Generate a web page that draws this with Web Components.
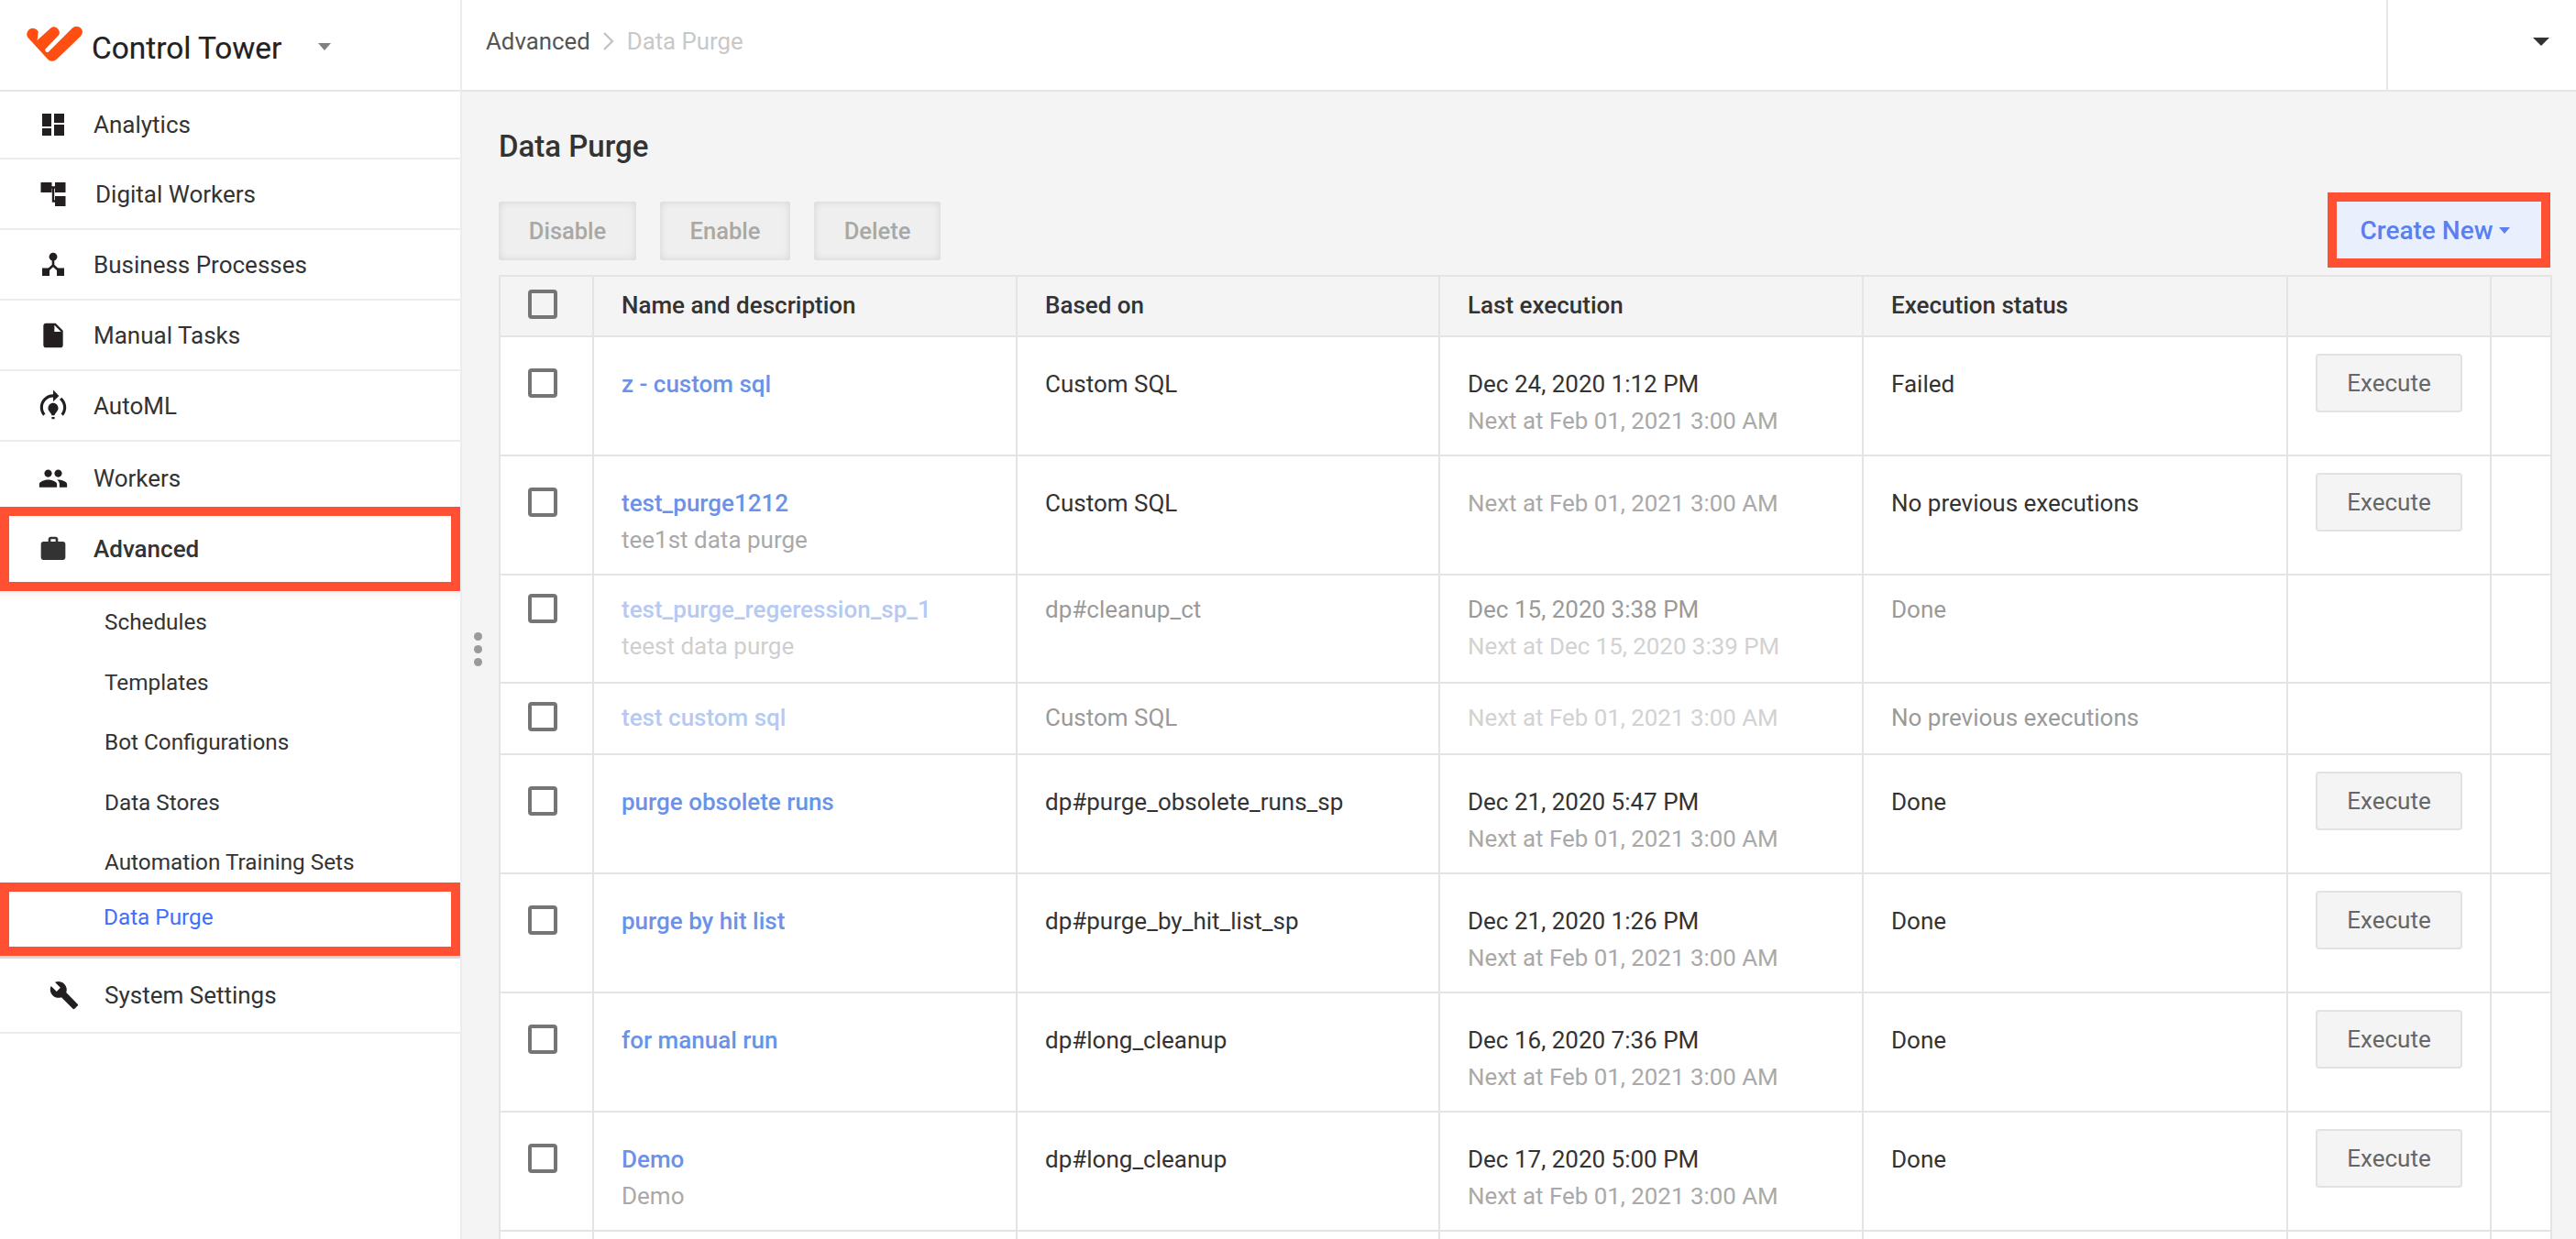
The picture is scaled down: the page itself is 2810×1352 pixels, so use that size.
<!DOCTYPE html>
<html><head><meta charset="utf-8"><title>Data Purge</title>
<style>
html,body{margin:0;padding:0;height:1352px;overflow:hidden;background:#f4f4f4;font-family:Roboto,"Liberation Sans",sans-serif;color:#333}
app-shell{height:1352px;overflow:hidden}
</style></head><body>
<app-shell>
  <side-bar slot="side">
    <nav-item label="Analytics" icon="analytics" first></nav-item>
    <nav-item label="Digital Workers" icon="digital" wide></nav-item>
    <nav-item label="Business Processes" icon="process"></nav-item>
    <nav-item label="Manual Tasks" icon="file"></nav-item>
    <nav-item label="AutoML" icon="automl"></nav-item>
    <nav-item label="Workers" icon="people" short></nav-item>
    <nav-item label="Advanced" icon="work" active></nav-item>
    <sub-nav>
      <sub-item>Schedules</sub-item>
      <sub-item>Templates</sub-item>
      <sub-item>Bot Configurations</sub-item>
      <sub-item>Data Stores</sub-item>
      <sub-item>Automation Training Sets</sub-item>
      <sub-item current>Data Purge</sub-item>
    </sub-nav>
    <nav-item label="System Settings" icon="wrench" settings></nav-item>
  </side-bar>
  <top-bar slot="top"></top-bar>
  <page-toolbar slot="main"></page-toolbar>
  <purge-table slot="main">
    <purge-row h="130" name="z - custom sql" based="Custom SQL" last="Dec 24, 2020 1:12 PM" next="Next at Feb 01, 2021 3:00 AM" status="Failed" exec></purge-row>
    <purge-row h="130" name="test_purge1212" desc="tee1st data purge" based="Custom SQL" next="Next at Feb 01, 2021 3:00 AM" status="No previous executions" exec></purge-row>
    <purge-row h="118" off name="test_purge_regeression_sp_1" desc="teest data purge" based="dp#cleanup_ct" last="Dec 15, 2020 3:38 PM" next="Next at Dec 15, 2020 3:39 PM" status="Done"></purge-row>
    <purge-row h="78" off name="test custom sql" based="Custom SQL" next="Next at Feb 01, 2021 3:00 AM" status="No previous executions"></purge-row>
    <purge-row h="130" name="purge obsolete runs" based="dp#purge_obsolete_runs_sp" last="Dec 21, 2020 5:47 PM" next="Next at Feb 01, 2021 3:00 AM" status="Done" exec></purge-row>
    <purge-row h="130" name="purge by hit list" based="dp#purge_by_hit_list_sp" last="Dec 21, 2020 1:26 PM" next="Next at Feb 01, 2021 3:00 AM" status="Done" exec></purge-row>
    <purge-row h="130" name="for manual run" based="dp#long_cleanup" last="Dec 16, 2020 7:36 PM" next="Next at Feb 01, 2021 3:00 AM" status="Done" exec></purge-row>
    <purge-row h="130" name="Demo" desc="Demo" based="dp#long_cleanup" last="Dec 17, 2020 5:00 PM" next="Next at Feb 01, 2021 3:00 AM" status="Done" exec></purge-row>
    <purge-row h="130" blank></purge-row>
  </purge-table>
</app-shell>
<script>
const ICONS={
analytics:`<svg width="26" height="26" viewBox="0 0 26 26"><g fill="#231f20"><rect x="1" y="1" width="10" height="14"/><rect x="1" y="17" width="10" height="8"/><rect x="14" y="1" width="11" height="10"/><rect x="14" y="13" width="11" height="12"/></g></svg>`,
digital:`<svg width="28" height="28" viewBox="0 0 28 28"><g fill="#231f20"><rect x="0.5" y="1" width="12" height="11"/><rect x="16" y="1" width="11.5" height="11"/><rect x="16" y="16" width="11.5" height="11"/></g><path d="M12 6.5H16M14 6.5V21.5H16" fill="none" stroke="#231f20" stroke-width="2.4"/></svg>`,
process:`<svg width="28" height="28" viewBox="0 0 28 28"><g fill="#231f20"><circle cx="14" cy="5.2" r="4.4"/><rect x="2" y="17.5" width="8" height="8.5"/><rect x="18" y="17.5" width="8" height="8.5"/></g><path d="M14 8V14.5L6 22M14 14.5L22 22" fill="none" stroke="#231f20" stroke-width="2.6"/></svg>`,
file:`<svg width="32" height="32" viewBox="0 0 24 24"><path fill="#231f20" d="M6 2c-1.1 0-2 .9-2 2v16c0 1.1.9 2 2 2h12c1.1 0 2-.9 2-2V8l-6-6H6zm7 7V3.5L18.5 9H13z"/></svg>`,
automl:`<svg width="38" height="38" viewBox="0 0 24 24"><path fill="#231f20" d="M15.5 13.5c0 2-2.5 3.5-2.5 5h-2c0-1.5-2.5-3-2.5-5C8.5 11.57 10.07 10 12 10s3.500 1.570 3.500 3.500zM13 19.500h-2V21h2v-1.500zM19 13c0 1.680-.59 3.210-1.580 4.420l1.420 1.420C20.180 17.270 21 15.230 21 13c0-2.740-1.230-5.190-3.160-6.840l-1.420 1.420C17.990 8.860 19 10.820 19 13zM16 5l-4-4v3c-4.970 0-9 4.030-9 9 0 2.230.82 4.270 2.160 5.840l1.420-1.420C5.590 16.210 5 14.680 5 13c0-3.860 3.140-7 7-7v3l4-4z"/></svg>`,
people:`<svg width="33" height="33" viewBox="0 0 24 24"><path fill="#231f20" d="M16 11c1.660 0 2.990-1.340 2.990-3S17.660 5 16 5c-1.660 0-3 1.340-3 3s1.340 3 3 3zm-8 0c1.660 0 2.990-1.340 2.990-3S9.660 5 8 5C6.340 5 5 6.340 5 8s1.340 3 3 3zm0 2c-2.330 0-7 1.170-7 3.500V19h14v-2.500c0-2.330-4.670-3.500-7-3.500zm8 0c-.29 0-.62.02-.97.05 1.160.84 1.970 1.970 1.970 3.450V19h6v-2.500c0-2.330-4.670-3.500-7-3.500z"/></svg>`,
work:`<svg width="32" height="32" viewBox="0 0 24 24"><path fill="#333" d="M20 6h-4V4c0-1.110-.89-2-2-2h-4c-1.110 0-2 .89-2 2v2H4c-1.110 0-1.990.89-1.990 2L2 19c0 1.110.89 2 2 2h16c1.110 0 2-.89 2-2V8c0-1.110-.89-2-2-2zm-6 0h-4V4h4v2z"/></svg>`,
wrench:`<svg width="33" height="33" viewBox="0 0 24 24"><path fill="#231f20" d="M22.700 19l-9.100-9.100c.9-2.300.4-5-1.500-6.900-2-2-5-2.400-7.400-1.300L9 6 6 9 1.600 4.700C.4 7.100.9 10.100 2.900 12.100c1.900 1.900 4.600 2.400 6.900 1.500l9.100 9.100c.4.4 1 .4 1.400 0l2.300-2.300c.5-.4.5-1.100.1-1.400z"/></svg>`
};
function def(name,css,html,extra){
  const C=class extends HTMLElement{
    connectedCallback(){
      if(this.shadowRoot)return;
      const r=this.attachShadow({mode:'open'});
      r.innerHTML=`<style>${css}</style>`+(typeof html==='function'?html(this):html);
      if(extra)extra(this,r);
    }
  };
  customElements.define(name,C);
}
def('app-shell',`:host{display:grid;grid-template-columns:504px 1fr;grid-template-rows:100px 1fr;width:2810px}
 .s{grid-row:1/3;grid-column:1;min-height:0}.t{grid-column:2;grid-row:1}.m{grid-column:2;grid-row:2;padding:0 26px 0 40px;min-height:0;overflow:hidden;position:relative}
 .dots{position:absolute;left:13px;top:590px;display:flex;flex-direction:column;gap:5px}
 .dots i{width:9px;height:9px;border-radius:50%;background:#9a9a9a}`,
 `<div class="s"><slot name="side"></slot></div><div class="t"><slot name="top"></slot></div><div class="m"><div class="dots"><i></i><i></i><i></i></div><slot name="main"></slot></div>`);
def('side-bar',`:host{display:flex;flex-direction:column;box-sizing:border-box;height:1352px;background:#fff;border-right:2px solid #ececec}
 header{height:100px;box-sizing:border-box;border-bottom:2px solid #e6e6e6;display:flex;align-items:center;position:relative}
 svg.logo{margin-left:28px;flex:none;margin-top:-2px}
 .n{font-size:33.400px;color:#222;margin-left:10px;-webkit-text-stroke:.2px #222;position:relative;top:3px}
 .c{width:0;height:0;border:7.500px solid transparent;border-top:8px solid #808080;border-bottom:0;margin-left:40px;margin-top:4px}`,
 `<header><svg class="logo" width="62" height="40" viewBox="28 29 62 40"><path fill="#fe4e12" d="M30 41.500A6.500 6.500 0 1 1 41.800 35.500L40.500 45L55.500 31.500A6 6 0 0 1 64 39.500L49.500 54.500A2.600 2.600 0 0 0 52.500 58L79 31.500A6 6 0 0 1 88 40.500L61.500 66A6.500 6.500 0 0 1 52 65.500Z"/></svg><span class="n">Control Tower</span><i class="c"></i></header><slot></slot>`);
def('nav-item',`:host{display:flex;align-items:center;box-sizing:border-box;height:77px;border-bottom:2px solid #ececec;font-size:26px;color:#333;position:relative;background:#fff}
 :host([first]){height:74px}:host([short]){height:71px;border-bottom:0;padding-top:8px}
 :host([active]){height:92px;border:10px solid #ff5033;font-weight:500;color:#333;z-index:2}
 :host([settings]){height:82px}
 .i{position:absolute;left:58px;top:50%;transform:translate(-50%,-50%);display:flex}
 :host([short]) .i{top:calc(50% + 4px)}
 :host([active]) .i{left:48px}
 :host([settings]) .i{left:70px}
 .t{margin-left:102px}:host([wide]) .t{margin-left:104px}:host([active]) .t{margin-left:92px}:host([settings]) .t{margin-left:114px}`,
 h=>`<span class="i">${ICONS[h.getAttribute('icon')]}</span><span class="t">${h.getAttribute('label')}</span>`);
def('sub-nav',`:host{display:block;padding-top:1px;border-bottom:3px solid #d8d8d8;box-shadow:inset 0 10px 10px -8px rgba(0,0,0,.09)}`,`<slot></slot>`);
def('sub-item',`:host{display:block;height:65.500px;line-height:65.500px;padding-left:114px;font-size:24.300px;color:#333;background:transparent}
 :host([current]){box-sizing:border-box;height:80px;line-height:56px;margin-top:-10.500px;border:10px solid #ff5033;padding-left:103px;color:#3d6fff;background:#fff;position:relative}`,`<slot></slot>`);
def('top-bar',`:host{display:flex;align-items:center;box-sizing:border-box;height:100px;background:#fff;border-bottom:2px solid #e6e6e6;font-size:25.800px;padding-left:26px}
 .t{display:flex;align-items:center;margin-top:-8px}
 .a{color:#555}.chev{margin:0 13px;display:flex}.b{color:#c8c8c8}
 .r{margin-left:auto;align-self:stretch;width:207px;box-sizing:border-box;border-left:2px solid #e6e6e6;position:relative}
 .r i{position:absolute;right:29px;top:41px;width:0;height:0;border:9px solid transparent;border-top:9px solid #333;border-bottom:0}`,
 `<div class="t"><span class="a">Advanced</span><span class="chev"><svg width="14" height="24" viewBox="0 0 14 24"><path d="M2 3l9 9-9 9" fill="none" stroke="#c4c4c4" stroke-width="2.400"/></svg></span><span class="b">Data Purge</span></div><div class="r"><i></i></div>`);
def('page-toolbar',`:host{display:block}
 h1{margin:40px 0 0;font-size:33px;line-height:40px;font-weight:500;color:#333}
 .bar{display:flex;height:82px;margin-top:30px;margin-bottom:8px;justify-content:space-between}
 .g{display:flex;gap:26px;padding-top:10px;height:64px}
 .d{box-sizing:border-box;height:64px;display:flex;align-items:center;justify-content:center;background:#efefef;border-radius:3px;box-shadow:inset 0 0 8px rgba(0,0,0,.12);color:#a8a8a8;font-size:25.500px;font-weight:500}
 .cn{box-sizing:border-box;width:243px;height:82px;margin-right:2px;border:10px solid #ff5033;padding-right:8px;background:#e9effc;color:#5a80f0;font-size:28px;font-weight:500;display:flex;align-items:center;justify-content:center;gap:7px}
 .cn i{width:0;height:0;border:6.500px solid transparent;border-top:7px solid #5a80f0;border-bottom:0;margin-top:1px}`,
 `<h1>Data Purge</h1><div class="bar"><div class="g"><div class="d" style="width:150px">Disable</div><div class="d" style="width:142px">Enable</div><div class="d" style="width:138px">Delete</div></div><div class="cn">Create New<i></i></div></div>`);
const COLS='grid-template-columns:102px 462px 461px 462px 463px 222px 66px;';
def('purge-table',`:host{display:block;width:2240px;box-sizing:border-box;border-top:2px solid #e4e4e4;border-left:2px solid #e4e4e4;font-size:26px;color:#333}
 .h{display:grid;${COLS}height:66px;box-sizing:border-box;border-bottom:2px solid #e4e4e4;background:#f4f4f4;font-weight:500}
 .h>div{border-right:2px solid #e4e4e4;padding:11px 0 0 30px;line-height:40px}
 .cb{display:block;box-sizing:border-box;width:32px;height:32px;border:4px solid #757575;border-radius:4px;margin-top:3px}`,
 `<div class="h"><div><span class="cb"></span></div><div>Name and description</div><div>Based on</div><div>Last execution</div><div>Execution status</div><div></div><div></div></div><slot></slot>`);
def('purge-row',`:host{display:grid;${COLS}box-sizing:border-box;border-bottom:2px solid #e4e4e4;background:#fff;line-height:40px;--link:#6a93e8;--sub:#a9a9a9;--txt:#333;--nx:#a9a9a9;font-size:26px}
 :host([off]){--link:#b5caf2;--sub:#cfcfcf;--txt:#9a9a9a;--nx:#d2d2d2}
 .c{border-right:2px solid #e4e4e4;padding:31px 0 0 30px;color:var(--txt);min-width:0;white-space:nowrap;box-sizing:border-box}
 :host([off]) .c{padding-top:17px}
 .cb{display:block;box-sizing:border-box;width:32px;height:32px;border:4px solid #757575;border-radius:4px;margin-top:3px}
 .l{color:var(--link);font-weight:500}.s{color:var(--sub)}.n{color:var(--nx);font-size:25.900px}
 .x{box-sizing:border-box;width:160px;height:64px;margin-top:-13px;background:#f4f4f4;border:2px solid #e2e2e2;border-radius:4px;color:#666;display:flex;align-items:center;justify-content:center}`,
 h=>{const a=k=>h.getAttribute(k);
  if(h.hasAttribute('blank')) return `<div class="c"></div>`.repeat(7);
  const last=a('last')?`<div>${a('last')}</div>`:'';
  return `<div class="c"><span class="cb"></span></div><div class="c"><div class="l">${a('name')}</div>${a('desc')?`<div class="s">${a('desc')}</div>`:''}</div><div class="c">${a('based')}</div><div class="c">${last}<div class="n">${a('next')}</div></div><div class="c">${a('status')}</div><div class="c">${h.hasAttribute('exec')?'<div class="x">Execute</div>':''}</div><div class="c"></div>`;},
 (h)=>{h.style.height=h.getAttribute('h')+'px';});
</script>
</body></html>
